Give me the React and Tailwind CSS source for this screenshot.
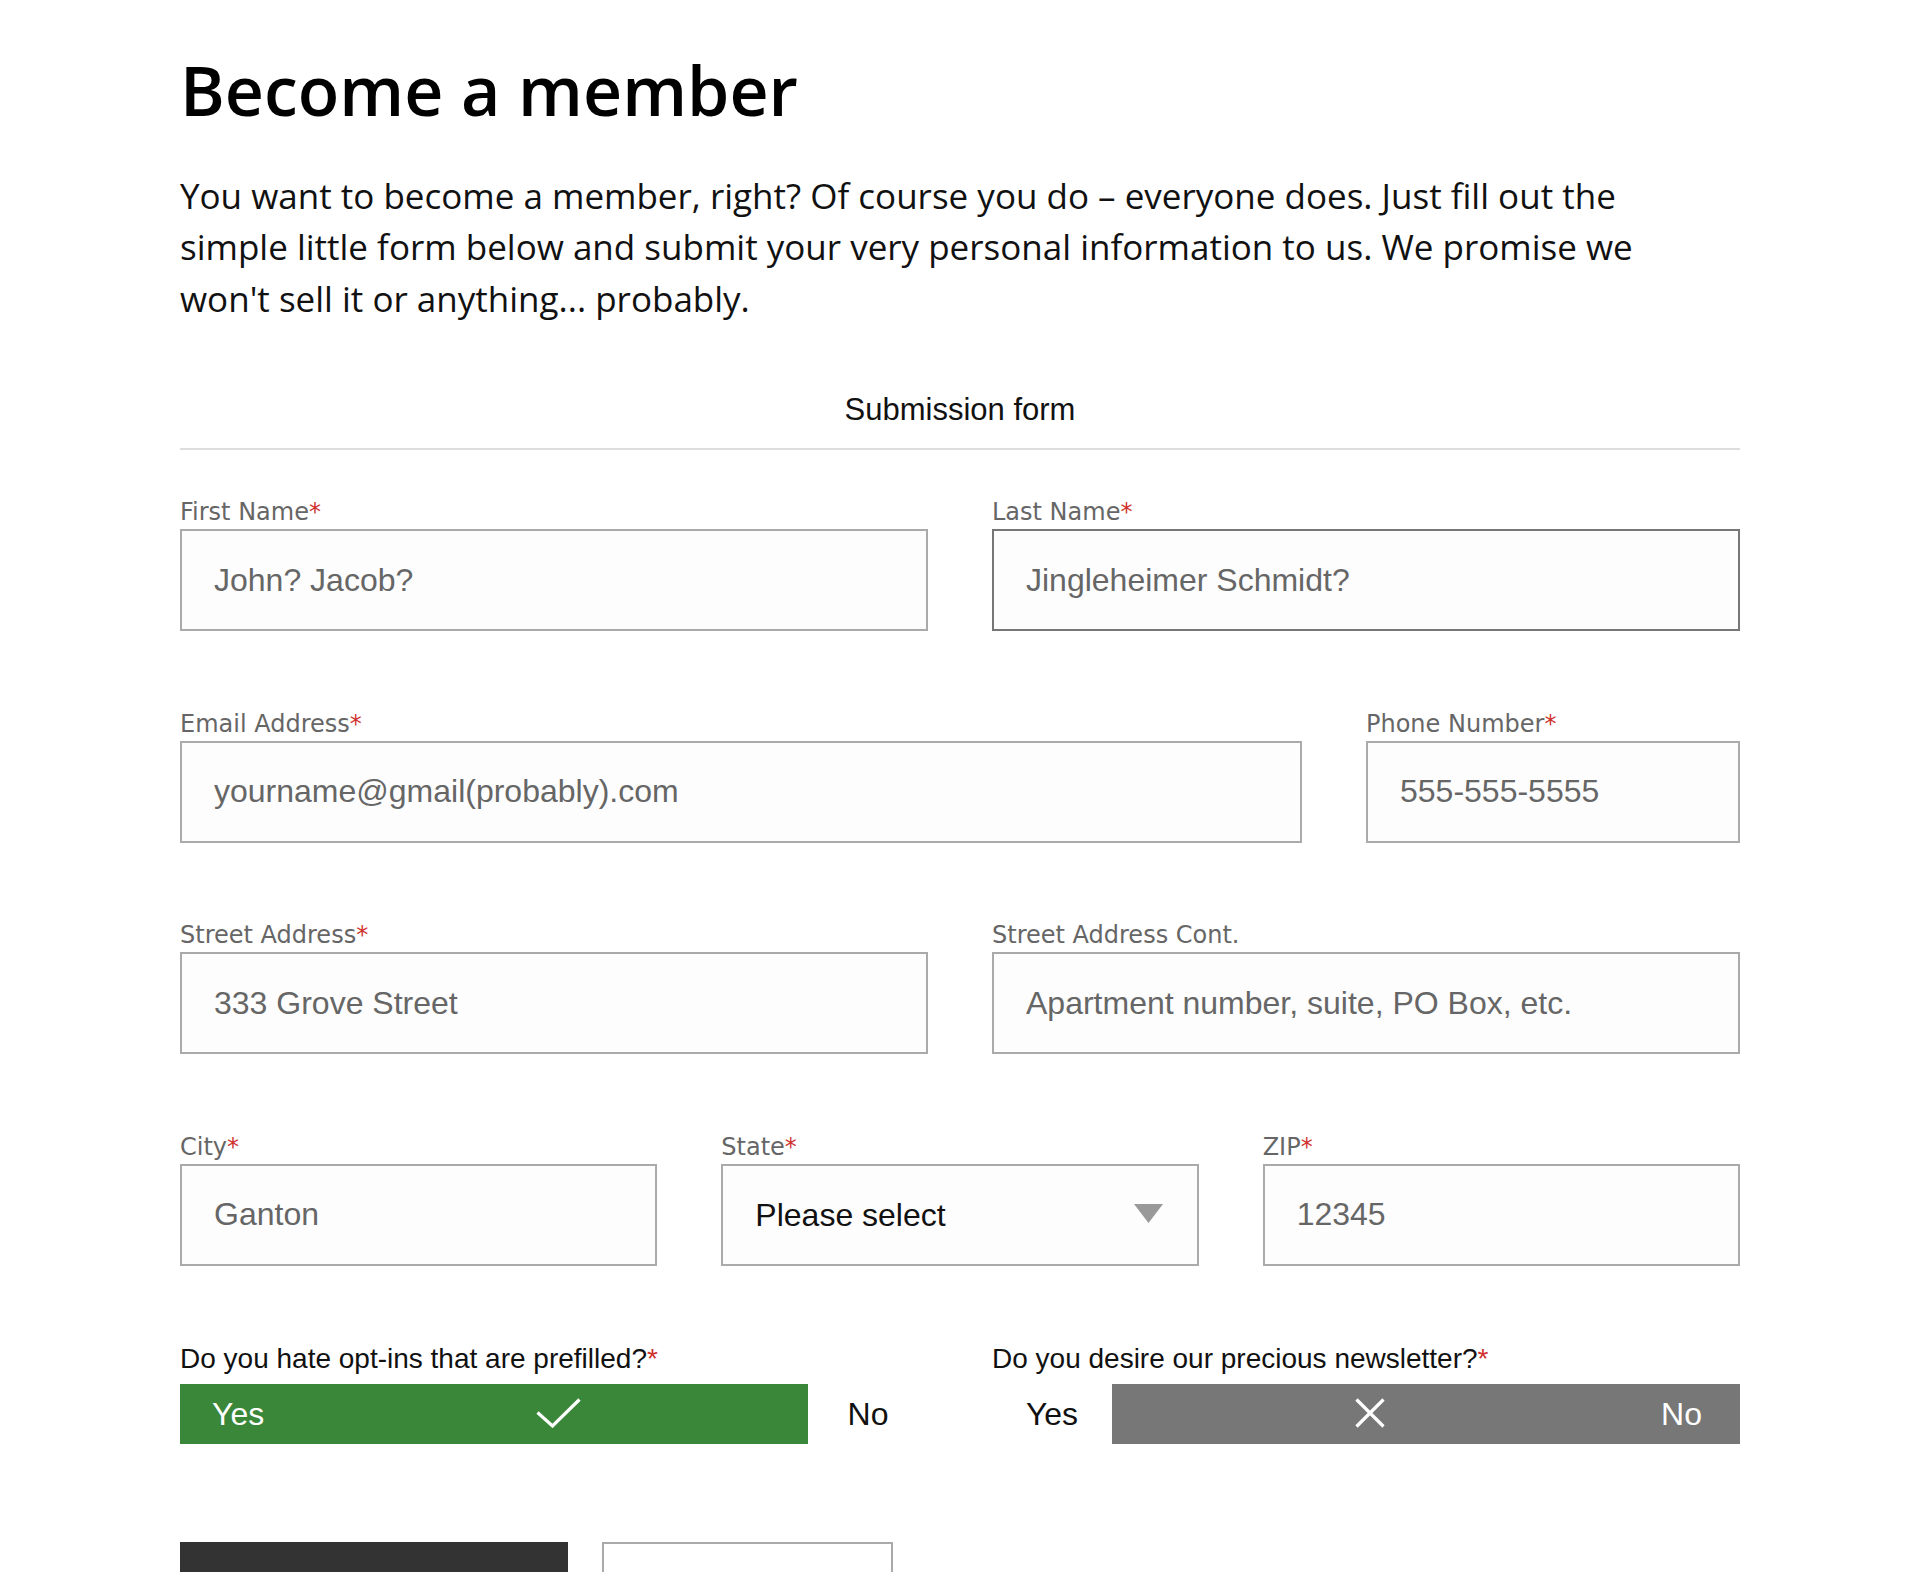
import { useState } from "react";

const labelCls = "block font-['DejaVu_Sans',sans-serif] text-[24px] leading-[30px] mb-[2px] text-[#666]";
const inputCls =
  "block w-full h-[102px] border-2 bg-[#fdfdfd] px-[32px] font-['Liberation_Sans',Arial,sans-serif] text-[32px] text-[#333] placeholder:text-[#666] outline-none";

// Field label with optional red asterisk
function Label({ children, required }) {
  return (
    <label className={labelCls}>
      {children}
      {required && <span className="text-[#d0312d]">*</span>}
    </label>
  );
}

function Field({ label, placeholder, required, dark }) {
  return (
    <div>
      <Label required={required}>{label}</Label>
      <input
        type="text"
        placeholder={placeholder}
        className={`${inputCls} ${dark ? "border-[#777]" : "border-[#aaa]"}`}
      />
    </div>
  );
}

function Check() {
  return (
    <svg width="45" height="30" viewBox="0 0 45 30" fill="none">
      <path d="M1.5 14.5 L16.5 28 L43.5 1.5" stroke="#fff" strokeWidth="3.2" />
    </svg>
  );
}

function Cross() {
  return (
    <svg width="30" height="30" viewBox="0 0 30 30" fill="none">
      <path d="M1.5 1.5 L28.5 28.5 M28.5 1.5 L1.5 28.5" stroke="#fff" strokeWidth="3.2" />
    </svg>
  );
}

// Two-state toggle: selected side grows and takes the colour
function Toggle({ question, value, onChange }) {
  const yes = value === "yes";
  return (
    <div>
      <div className="font-['Liberation_Sans',Arial,sans-serif] text-[28px] leading-[32px] text-[#111] mb-[9px]">
        {question}
        <span className="text-[#d0312d]">*</span>
      </div>
      <div className="relative flex h-[60px] font-['Liberation_Sans',Arial,sans-serif] text-[32px]">
        {yes ? (
          <>
            <button
              type="button"
              onClick={() => onChange("yes")}
              className="flex w-[628px] items-center bg-[#3a873a] pl-[32px] text-white"
            >
              Yes
            </button>
            <button
              type="button"
              onClick={() => onChange("no")}
              className="flex flex-1 items-center justify-center text-[#111]"
            >
              No
            </button>
            <span className="pointer-events-none absolute left-[356px] top-[14px]">
              <Check />
            </span>
          </>
        ) : (
          <>
            <button
              type="button"
              onClick={() => onChange("yes")}
              className="flex flex-1 items-center justify-center text-[#111]"
            >
              Yes
            </button>
            <button
              type="button"
              onClick={() => onChange("no")}
              className="flex w-[628px] items-center justify-end bg-[#777] pr-[38px] text-white"
            >
              No
            </button>
            <span className="pointer-events-none absolute left-[363px] top-[14px]">
              <Cross />
            </span>
          </>
        )}
      </div>
    </div>
  );
}

export default function App() {
  const [optin, setOptin] = useState("yes");
  const [news, setNews] = useState("no");

  return (
    <div className="min-h-screen bg-white">
      <div className="mx-auto w-[1560px] pt-[49px]">
        <h1 className="font-['Open_Sans',sans-serif] text-[68px] font-semibold leading-[1.2] text-black">
          Become a member
        </h1>
        <p className="mt-[39px] max-w-[1500px] font-['Open_Sans',sans-serif] text-[35px] leading-[51.5px] text-[#111]">
          You want to become a member, right? Of course you do – everyone does. Just fill out the simple
          little form below and submit your very personal information to us. We promise we won't sell it or
          anything... probably.
        </p>

        <form className="mt-[66px]" onSubmit={(e) => e.preventDefault()}>
          <div className="border-b-2 border-[#ddd] pb-[18px] text-center font-['Liberation_Sans',Arial,sans-serif] text-[31px] leading-[40px] text-[#111]">
            Submission form
          </div>

          <div className="flex flex-col gap-[77.5px] pt-[47px]">
            <div className="grid grid-cols-2 gap-x-16">
              <Field label="First Name" placeholder="John? Jacob?" required />
              <Field label="Last Name" placeholder="Jingleheimer Schmidt?" required dark />
            </div>

            <div className="grid grid-cols-[3fr_1fr] gap-x-16">
              <Field label="Email Address" placeholder="yourname@gmail(probably).com" required />
              <Field label="Phone Number" placeholder="555-555-5555" required />
            </div>

            <div className="grid grid-cols-2 gap-x-16">
              <Field label="Street Address" placeholder="333 Grove Street" required />
              <Field label="Street Address Cont." placeholder="Apartment number, suite, PO Box, etc." />
            </div>

            <div className="grid grid-cols-3 gap-x-16">
              <Field label="City" placeholder="Ganton" required />
              <div>
                <Label required>State</Label>
                <div className="relative">
                  <select
                    defaultValue=""
                    className="block h-[102px] w-full appearance-none border-2 border-[#aaa] bg-[#fdfdfd] px-[32px] font-['Liberation_Sans',Arial,sans-serif] text-[32px] text-[#111] outline-none"
                  >
                    <option value="">Please select</option>
                    <option>Alabama</option>
                    <option>Alaska</option>
                    <option>California</option>
                    <option>New York</option>
                  </select>
                  <svg
                    className="pointer-events-none absolute right-[36px] top-[40px]"
                    width="29"
                    height="19"
                    viewBox="0 0 29 19"
                  >
                    <path d="M0 0 H29 L14.5 19 Z" fill="#999" />
                  </svg>
                </div>
              </div>
              <Field label="ZIP" placeholder="12345" required />
            </div>

            <div className="grid grid-cols-2 gap-x-16">
              <Toggle question="Do you hate opt-ins that are prefilled?" value={optin} onChange={setOptin} />
              <Toggle question="Do you desire our precious newsletter?" value={news} onChange={setNews} />
            </div>
          </div>

          <div className="mt-[98px] flex gap-[34px] pb-16">
            <button
              type="submit"
              className="h-[90px] bg-[#333] px-[60px] font-['Liberation_Sans',Arial,sans-serif] text-[22px] font-bold uppercase tracking-[3.5px] text-white"
            >
              Submit your info
            </button>
            <button
              type="reset"
              className="h-[90px] border-2 border-[#aaa] bg-white px-[60px] font-['Liberation_Sans',Arial,sans-serif] text-[22px] uppercase tracking-[2.2px] text-[#777]"
            >
              Clear form
            </button>
          </div>
        </form>
      </div>
    </div>
  );
}
